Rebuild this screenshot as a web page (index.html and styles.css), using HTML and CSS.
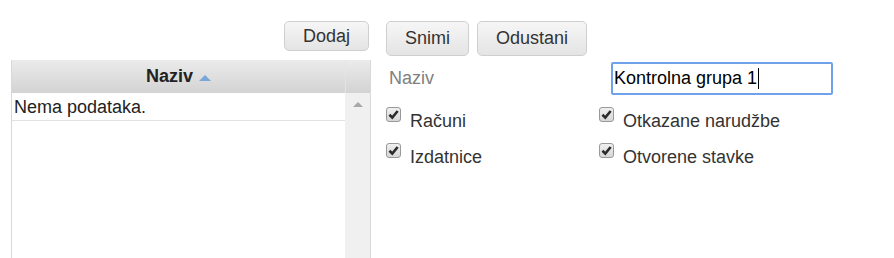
FILE: index.html
```html
<!DOCTYPE html>
<html lang="hr">
<head>
<meta charset="utf-8">
<title>Kontrolne grupe</title>
<link rel="stylesheet" href="styles.css">
</head>
<body>
<div class="page">
  <div class="left">
    <div class="toolbar">
      <button class="btn btn-small" type="button">Dodaj</button>
    </div>
    <div class="grid">
      <div class="grid-head">
        <div class="head-cell">Naziv <span class="sort-up"></span></div>
        <div class="head-scroll"></div>
      </div>
      <div class="grid-body">
        <div class="rows">
          <div class="row">Nema podataka.</div>
        </div>
        <div class="scrollbar"><span class="scroll-up"></span></div>
      </div>
    </div>
  </div>
  <div class="right">
    <div class="actions">
      <button class="btn btn-snimi" type="button">Snimi</button>
      <button class="btn btn-odustani" type="button">Odustani</button>
    </div>
    <div class="form">
      <div class="field-label">Naziv</div>
      <div class="field-input"><span class="input">Kontrolna grupa 1<span class="caret"></span></span></div>
      <div class="check"><span class="box"><svg viewBox="0 0 10 10" width="11" height="11"><path d="M1.3 5.2 L3.9 7.8 L8.8 1.8" fill="none" stroke="#2b2b2b" stroke-width="2.4"/></svg></span><span class="check-text">Računi</span></div>
      <div class="check check-2"><span class="box"><svg viewBox="0 0 10 10" width="11" height="11"><path d="M1.3 5.2 L3.9 7.8 L8.8 1.8" fill="none" stroke="#2b2b2b" stroke-width="2.4"/></svg></span><span class="check-text">Otkazane narudžbe</span></div>
      <div class="check"><span class="box"><svg viewBox="0 0 10 10" width="11" height="11"><path d="M1.3 5.2 L3.9 7.8 L8.8 1.8" fill="none" stroke="#2b2b2b" stroke-width="2.4"/></svg></span><span class="check-text">Izdatnice</span></div>
      <div class="check check-2"><span class="box"><svg viewBox="0 0 10 10" width="11" height="11"><path d="M1.3 5.2 L3.9 7.8 L8.8 1.8" fill="none" stroke="#2b2b2b" stroke-width="2.4"/></svg></span><span class="check-text">Otvorene stavke</span></div>
    </div>
  </div>
</div>
</body>
</html>
```
FILE: styles.css
```css
html, body {
  margin: 0;
  padding: 0;
  background: #fff;
  overflow: hidden;
}
body {
  font-family: "Liberation Sans", Arial, sans-serif;
  font-size: 18px;
  color: #222;
}
.page {
  display: flex;
  padding: 21px 0 0 11px;
  height: 237px;
}
.left {
  width: 360px;
  display: flex;
  flex-direction: column;
}
.toolbar {
  display: flex;
  justify-content: flex-end;
  padding-right: 2px;
  height: 30px;
  margin-bottom: 9px;
}
.btn {
  font-family: "Liberation Sans", Arial, sans-serif;
  font-size: 18px;
  color: #333;
  background: linear-gradient(#f6f6f6, #e4e4e4);
  border: 1px solid #cfcfcf;
  border-radius: 5px;
  padding: 0;
  margin: 0;
  box-sizing: border-box;
}
.btn-small { width: 85px; height: 30px; }
.btn-snimi { width: 83px; height: 35px; }
.btn-odustani { width: 110px; height: 35px; }
.grid {
  flex: 1;
  border-left: 1px solid #d8d8d8;
  border-right: 1px solid #d8d8d8;
  display: flex;
  flex-direction: column;
  min-height: 210px;
}
.grid-head {
  display: flex;
  height: 33px;
  background: linear-gradient(#ebebeb, #d3d3d3);
}
.head-cell {
  flex: 1;
  display: flex;
  align-items: center;
  justify-content: center;
  font-weight: bold;
  font-size: 18px;
  color: #222;
  gap: 6px;
}
.sort-up {
  width: 0;
  height: 0;
  border-left: 6px solid transparent;
  border-right: 6px solid transparent;
  border-bottom: 6px solid #7aa6dc;
  margin-top: 3px;
}
.head-scroll {
  width: 24px;
  border-left: 1px solid #e4e4e4;
}
.grid-body {
  flex: 1;
  display: flex;
}
.rows {
  flex: 1;
}
.row {
  height: 27px;
  line-height: 28px;
  padding-left: 2px;
  border-bottom: 1px solid #e2e2e2;
  color: #222;
}
.scrollbar {
  width: 25px;
  background: #f0f0f0;
  display: flex;
  justify-content: center;
  padding-top: 9px;
  box-sizing: border-box;
}
.scroll-up {
  width: 0;
  height: 0;
  border-left: 5px solid transparent;
  border-right: 5px solid transparent;
  border-bottom: 5px solid #a8a8a8;
}
.right {
  margin-left: 15px;
  display: flex;
  flex-direction: column;
}
.actions {
  display: flex;
  gap: 8px;
  height: 35px;
  margin-bottom: 6px;
}
.form {
  display: grid;
  grid-template-columns: 213px 234px;
  grid-template-rows: 33px 44px 36px;
}
.field-label {
  color: #808080;
  padding-left: 3px;
  display: flex;
  align-items: center;
}
.field-input {
  padding-left: 12px;
}
.input {
  display: flex;
  align-items: center;
  width: 222px;
  height: 33px;
  box-sizing: border-box;
  border: 2px solid #6fa2ea;
  border-radius: 2px;
  padding-left: 1px;
  color: #000;
}
.caret {
  display: inline-block;
  width: 1px;
  height: 21px;
  background: #000;
  margin-left: 1px;
}
.check {
  display: flex;
  align-items: flex-start;
  padding-top: 12px;
  color: #333;
}
.check + .check + .check {
  padding-top: 4px;
}
.box {
  width: 15px;
  height: 15px;
  box-sizing: border-box;
  border: 1px solid #999;
  border-radius: 3px;
  background: linear-gradient(#f0f0f0, #d6d6d6);
  display: flex;
  align-items: center;
  justify-content: center;
  margin-right: 9px;
  flex-shrink: 0;
}
.check-text {
  line-height: 22px;
  margin-top: 3px;
}
```
